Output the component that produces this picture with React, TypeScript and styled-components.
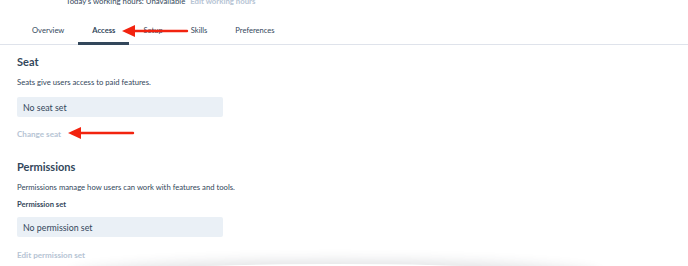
import React from 'react';
import styled, { createGlobalStyle } from 'styled-components';

const GlobalStyle = createGlobalStyle`
  html, body {
    margin: 0;
    padding: 0;
    background: #ffffff;
    overflow: hidden;
  }
  body {
    font-family: Lato, "Open Sans", Arial, sans-serif;
    color: #33475b;
  }
`;

const Page = styled.div`
  position: relative;
  width: 688px;
  height: 266px;
  overflow: hidden;
`;

const WorkingHours = styled.div`
  margin-top: -4px;
  padding-left: 66px;
  font-size: 7.8px;
  line-height: 10px;
  display: flex;
  gap: 5px;
`;

const HoursLink = styled.span`
  color: #b6c4d4;
  font-weight: 700;
`;

const Tabs = styled.nav`
  display: flex;
  margin-top: 14px;
  padding-left: 18px;
  border-bottom: 1px solid #dfe3eb;
  height: 24px;
`;

const Tab = styled.div<{ $active?: boolean }>`
  padding: 0 14px;
  font-size: 7.6px;
  font-weight: ${({ $active }) => ($active ? 700 : 400)};
  color: #33475b;
  display: flex;
  align-items: center;
  padding-bottom: 2px;
  border-bottom: 3px solid ${({ $active }) => ($active ? '#33475b' : 'transparent')};
  margin-bottom: -1px;
`;

const Content = styled.main`
  padding: 0 17px;
`;

const Section = styled.section<{ $gap: number }>`
  display: flex;
  flex-direction: column;
  align-items: flex-start;
  margin-top: ${({ $gap }) => $gap}px;
`;

const Heading = styled.h2`
  margin: 0 0 8px;
  font-size: 11px;
  font-weight: 700;
  line-height: 14px;
`;

const Description = styled.p`
  margin: 0;
  font-size: 7.7px;
  line-height: 10px;
`;

const FieldLabel = styled.div`
  margin-top: 7px;
  font-size: 7.6px;
  font-weight: 700;
  line-height: 10px;
`;

const ReadonlyBox = styled.div<{ $gap: number }>`
  margin-top: ${({ $gap }) => $gap}px;
  width: 206px;
  height: 20px;
  box-sizing: border-box;
  background: #eaf0f6;
  border-radius: 2px;
  padding-left: 6px;
  display: flex;
  align-items: center;
  font-size: 8.8px;
`;

const DisabledLink = styled.span<{ $gap: number }>`
  margin-top: ${({ $gap }) => $gap}px;
  font-size: 8.1px;
  font-weight: 700;
  color: #b6c4d4;
  line-height: 10px;
`;

const FloatingBar = styled.div`
  margin: 4px 0 0 70px;
  width: 530px;
  height: 30px;
  border-radius: 50%;
  background: #ffffff;
  box-shadow: 0 -4px 12px rgba(40, 50, 60, 0.13);
`;

const Annotation = styled.svg`
  position: absolute;
  left: 0;
  top: 0;
  pointer-events: none;
`;

const RedArrow: React.FC<{ x1: number; x2: number; y: number }> = ({ x1, x2, y }) => (
  <g>
    <line x1={x1 + 10} y1={y} x2={x2} y2={y} stroke="#f2230f" strokeWidth={2.4} strokeLinecap="round" />
    <polygon points={`${x1},${y} ${x1 + 13},${y - 6} ${x1 + 13},${y + 6}`} fill="#f2230f" />
  </g>
);

const tabs = ['Overview', 'Access', 'Setup', 'Skills', 'Preferences'];

const App: React.FC = () => {
  return (
    <Page>
      <GlobalStyle />
      <WorkingHours>
        <span>Today's working hours: Unavailable</span>
        <HoursLink>Edit working hours</HoursLink>
      </WorkingHours>

      <Tabs>
        {tabs.map((t) => (
          <Tab key={t} $active={t === 'Access'}>
            {t}
          </Tab>
        ))}
      </Tabs>

      <Content>
        <Section $gap={10}>
          <Heading>Seat</Heading>
          <Description>Seats give users access to paid features.</Description>
          <ReadonlyBox $gap={10}>No seat set</ReadonlyBox>
          <DisabledLink $gap={12}>Change seat</DisabledLink>
        </Section>

        <Section $gap={21}>
          <Heading>Permissions</Heading>
          <Description>Permissions manage how users can work with features and tools.</Description>
          <FieldLabel>Permission set</FieldLabel>
          <ReadonlyBox $gap={8}>No permission set</ReadonlyBox>
          <DisabledLink $gap={13}>Edit permission set</DisabledLink>
        </Section>
      </Content>

      <FloatingBar />

      <Annotation width="688" height="266" viewBox="0 0 688 266">
        <RedArrow x1={122} x2={187} y={31} />
        <RedArrow x1={68} x2={133} y={133} />
      </Annotation>
    </Page>
  );
};

export default App;
